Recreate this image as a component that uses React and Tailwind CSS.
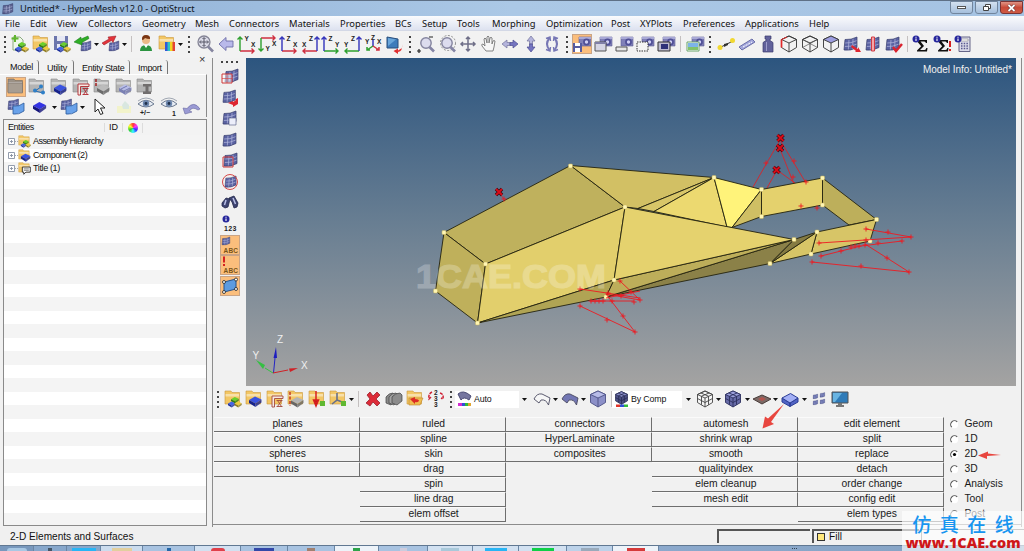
import React from "react";

const MENUS = [
  ["File", "w-[25px]"], ["Edit", "w-[27px]"], ["View", "w-[31px]"], ["Collectors", "w-[54px]"],
  ["Geometry", "w-[53px]"], ["Mesh", "w-[34px]"], ["Connectors", "w-[60px]"], ["Materials", "w-[51px]"],
  ["Properties", "w-[55px]"], ["BCs", "w-[27px]"], ["Setup", "w-[35px]"], ["Tools", "w-[35px]"],
  ["Morphing", "w-[54px]"], ["Optimization", "w-[65px]"], ["Post", "w-[29px]"], ["XYPlots", "w-[43px]"],
  ["Preferences", "w-[62px]"], ["Applications", "w-[64px]"], ["Help", "w-[30px]"],
];

/* ---------- drawing primitives, all on a 20 x 20 grid ---------- */

const Folder = ({ c = "#f3c765", d = "#c9973c" }) => (
  <g>
    <path d="M2 4.500V2h6l1 1.500h7.500V15H2z" fill={c} stroke={d} strokeWidth=".6" />
    <path d="M2.500 5h13.500v2.500h-13.500z" fill="#fff" opacity=".45" />
  </g>
);
const GrayFolder = () => <Folder c="#b4b4b4" d="#8a8a8a" />;

const Block = ({ x = 0, y = 0, s = 1, c = "#3a53e0", d = "#16228c" }) => (
  <g transform={`translate(${x} ${y}) scale(${s})`}>
    <path d="M0 3.500 6 0l6.500 3-6 4z" fill={c} />
    <path d="M0 3.500v3l6.500 4v-3.500z" fill={d} />
    <path d="M12.500 3v3l-6 4.500V7z" fill={d} opacity=".8" />
  </g>
);
const Trio = ({ x = 6, y = 9 }) => (
  <g>
    <Block x={x + 2} y={y - 1} s={0.62} c="#6ad02c" d="#2c7d12" />
    <Block x={x - 1} y={y + 3.5} s={0.58} c="#4364e8" d="#1a2e9c" />
    <Block x={x + 5.500} y={y + 3.5} s={0.58} c="#f0cb3e" d="#8f7a1c" />
  </g>
);
const Mesh = ({ x = 3, y = 3, s = 1, c = "#5a62a2" }) => (
  <g transform={`translate(${x} ${y}) scale(${s})`}>
    <path d="M1 2.500Q7 3 13 0v10.500Q7 14 0 13z" fill={c} />
    <path d="M.8 6Q7 6.500 13 3.500M.5 9.500Q7 10 13 7M5 2.800 4.300 13M9 2 8.600 12.400" fill="none" stroke="#b4b9de" strokeWidth=".7" />
    <path d="M1 2.500Q7 3 13 0v10.500Q7 14 0 13z" fill="none" stroke="#373c6c" strokeWidth=".7" />
  </g>
);
const Camera = () => (
  <g>
    <path d="M7 3h12v9H7z" fill="#8080b8" stroke="#5c5c94" strokeWidth=".6" />
    <path d="M7 3h12v2H7z" fill="#a9a9d6" />
    <circle cx="14.500" cy="8" r="3.400" fill="#4f4f96" />
    <circle cx="14.500" cy="8" r="1.700" fill="#cfcff4" />
  </g>
);
const Lens = ({ dashed }) => (
  <g>
    <circle cx="10" cy="9" r="5.200" fill="#dcdcee" stroke="#85859f" strokeWidth="1.400" />
    {dashed && <circle cx="11" cy="9" r="7.500" fill="none" stroke="#777" strokeWidth=".8" strokeDasharray="2 1.500" />}
    <path d="m13.500 13 4.500 4.500" stroke="#8585a5" strokeWidth="2.600" />
  </g>
);
const Glyph = ({ x, y, children, size = 6.500, fill = "#222", w }) => (
  <text x={x} y={y} fontSize={size} fill={fill} fontWeight="700" textLength={w} fontFamily="Liberation Sans, sans-serif">{children}</text>
);
const Axes = ({ flip, down, v, h, a, b }) => {
  const x0 = flip ? 17 : 3, x1 = flip ? 3 : 17, y0 = down ? 4 : 17, y1 = down ? 17 : 3;
  const sx = flip ? 1 : -1, sy = down ? -1 : 1;
  return (
    <g>
      <path d={`M${x0} ${y0}H${x1}m${2.5 * sx} -2.500 ${-2.5 * sx} 2.500 ${2.5 * sx} 2.500`} stroke={h} strokeWidth="1.400" fill="none" />
      <path d={`M${x0} ${y0}V${y1}m-2.500 ${2.5 * sy} 2.500 ${-2.5 * sy} 2.500 ${2.5 * sy}`} stroke={v} strokeWidth="1.400" fill="none" />
      <Glyph x={flip ? 9 : 7.500} y={down ? 17 : 7}>{a}</Glyph>
      <Glyph x={flip ? 2 : 14} y={down ? 12 : 13}>{b}</Glyph>
    </g>
  );
};
const Cube = ({ c = "none", top = "none", stroke = "#333", mesh }) => (
  <g strokeWidth=".9" stroke={stroke} strokeLinejoin="round">
    <path d="M10 2 17.500 5.500v8L10 18 2.500 13.500v-8z" fill={c} />
    <path d="M2.500 5.500 10 2l7.500 3.500L10 9z" fill={top} />
    <path d="M10 9v9" />
    {mesh && <path d="m2.500 9.500 7.500 4 7.500-4M6 4l7.500 3.200v8.600M14 4 6.500 7.200v8.600" fill="none" />}
  </g>
);
const Eye = () => (
  <g>
    <path d="M2 7q8-7.500 16 0-8 6-16 0z" fill="#e8edf5" stroke="#6c7a90" strokeWidth="1" />
    <circle cx="10" cy="6.500" r="3.200" fill="#6d87ae" />
    <circle cx="10" cy="6.500" r="1.400" fill="#20304a" />
    <path d="M2 4q8-6 16 0" fill="none" stroke="#8b94a2" strokeWidth=".8" />
  </g>
);
const Info = ({ x = 5, y = 5 }) => (
  <g>
    <circle cx={x} cy={y} r="3.500" fill="#27279c" />
    <path d={`M${x} ${y - 0.5}v2.500M${x} ${y - 2.2}v1`} stroke="#fff" strokeWidth="1.100" />
  </g>
);
const Surface = () => (
  <g>
    <Mesh x={2} y={2} s={0.8} />
    <path d="M7 9q6 1 11-3v8q-5 4-11 3z" fill="#69a2ea" stroke="#2c5a9c" strokeWidth=".8" />
  </g>
);
const Curve = ({ c, x = 2, y = 4 }) => (
  <path transform={`translate(${x} ${y})`} d="M0 6Q3 0 8 1l8 4-1.500 7Q12 6 7 7L5 10z" fill={c} stroke="#4a4a60" strokeWidth=".9" />
);
const SIGMA = "M6 6h10v3h-1.200q0-1.500-1.500-1.500H9.500L13 12l-4 4h4.500q1.500 0 1.800-2h1.200l-.5 3.500H6v-1l4.200-4.300L6 7.200z";
const Hinge = ({ c }) => (
  <g>
    <path d="M7 7h11v2.500H9.500V18H7z" fill="#f6e9e4" stroke={c} strokeWidth=".9" />
    <path d="M11.500 11.500h6M11.500 17.500h6M12.500 11.500l4 6M16.500 11.500l-4 6" fill="none" stroke={c} strokeWidth=".9" />
  </g>
);

const ICONS = {
  newModel: <g><path d="M3 3h7l3 3v10H3z" fill="#eef7ea" stroke="#8caa80" /><path d="M5 1v7M1.500 4.500h7" stroke="#61b52f" strokeWidth="2" /><Trio /></g>,
  openModel: <g><Folder /><Trio /></g>,
  saveModel: <g><path d="M2 2h14v14H2z" fill="#6c76ac" /><path d="M5 2h8v5H5zM5 10h8v6H5z" fill="#e6e8f4" /><Trio /></g>,
  importM: <g><Mesh x={8} y={7} s={0.75} /><path d="M15 2 8 5V3L1 8l8 3V8.500l7-4z" fill="#2fae25" stroke="#17731a" strokeWidth=".5" /></g>,
  exportM: <g><Mesh x={8} y={7} s={0.75} /><path d="M1 9 8 5 7 3l8-1-3 6.500-1.500-2L3 11z" fill="#e3343a" stroke="#8e1520" strokeWidth=".5" /></g>,
  user: <g><circle cx="10" cy="6" r="4" fill="#eab987" /><path d="M6 6q-.5-5 4-5t4 4q-3 0-5-1-1 2-3 2" fill="#7a3512" /><path d="M4 17q0-6 6-6t6 6z" fill="#2b9440" /><path d="m8 11 2 3 2-3z" fill="#fff" /></g>,
  folderChart: <g><Folder /><path d="M8 8h3v9H8z" fill="#3457d9" /><path d="M13 8h3v9h-3z" fill="#f1d322" /><path d="M15.500 8h2.500v9h-2.500z" fill="#e44335" /><path d="M10.500 8h2.500v9h-2.500z" fill="#31c5c0" /></g>,
  zoomFit: <g><circle cx="9" cy="8" r="6" fill="#dcdce8" stroke="#858596" strokeWidth="1.300" /><path d="M9 4v8M5 8h8M7.500 5 9 3.500 10.500 5M7.500 11 9 12.500l1.500-1.500M6 6.500 4.500 8 6 9.500M12 6.500 13.500 8 12 9.500" stroke="#555565" fill="none" /><path d="m13 12.500 5 5" stroke="#85859f" strokeWidth="2.600" /></g>,
  back: <path d="M3 10 10 3.500v3.500h7v6h-7v3.500z" fill="#b9b9ea" stroke="#6d6da8" strokeWidth=".9" />,
  ax1: <Axes v="#2ea02e" h="#cf3040" a="Y" b="X" />,
  ax2: <Axes down v="#2ea02e" h="#cf3040" a="Y" b="X" />,
  ax3: <Axes v="#3434bc" h="#cf3040" a="Z" b="X" />,
  ax4: <Axes flip v="#3434bc" h="#cf3040" a="Z" b="X" />,
  ax5: <Axes v="#3434bc" h="#2ea02e" a="Z" b="Y" />,
  ax6: <Axes flip v="#3434bc" h="#2ea02e" a="Z" b="Y" />,
  iso: <g><path d="M10 6v6" stroke="#3434bc" strokeWidth="1.500" /><path d="m10 12-6 4m0-3v3h3" stroke="#2ea02e" strokeWidth="1.500" fill="none" /><path d="m10 12 6 4m0-3v3h-3" stroke="#cf3040" strokeWidth="1.500" fill="none" /><Glyph x={2} y={10}>Y</Glyph><Glyph x={8} y={6}>Z</Glyph><Glyph x={14} y={10}>X</Glyph></g>,
  screenRot: <g><path d="m3 3 11 2v9L3 14z" fill="#3e7cbb" stroke="#284f7c" /><path d="m4 4 8 1.500L4 12z" fill="#6aa6da" /><path d="M18 10v4l-4 2.500v-2L9.500 17l4.500 3v-2q5-1 4-8z" fill="#df2f30" /></g>,
  zoomPM: <g><Lens /><path d="M1 17h4M3 15v4M13 3h4" stroke="#222" strokeWidth="1.200" /></g>,
  zoomCircle: <Lens dashed />,
  pan4: <path d="M10 3v14M3 10h14M8 5l2-2 2 2M8 15l2 2 2-2M5 8l-2 2 2 2M15 8l2 2-2 2" fill="none" stroke="#6f6f88" strokeWidth="1.500" />,
  hand: <path d="M7 17 3 12q-1-2 1-2l2 2-1-7q1-2 2 0l1 4V3q1-2 2 0v6l1-5q1-1.500 2 0v6l1-3q1-1 2 0l-1 6-1 4z" fill="#f7f7f7" stroke="#777" strokeWidth=".9" />,
  leftRight: <g strokeWidth=".7"><path d="m2 10 5-4v2.500h3v3H7V14z" fill="#b4b4dc" stroke="#74749c" /><path d="M10 8.500h3V6l5 4-5 4v-2.500h-3z" fill="#7474c0" stroke="#4c4c90" /></g>,
  upDown: <g strokeWidth=".7"><path d="m10 2 4 5h-2.500v3h-3V7H6z" fill="#b4b4dc" stroke="#74749c" /><path d="M8.500 10h3v3H14l-4 5-4-5h2.500z" fill="#7474c0" stroke="#4c4c90" /></g>,
  spin: <g fill="none" stroke="#7777b5" strokeWidth="2"><path d="M7.500 4Q2.500 10 7.500 16M12.500 16q5-6 0-12" /><path d="M4 4.500 8 3l.5 4M4 15.500l4 1.500.5-4M16 4.500 12 3l-.5 4M16 15.500 12 17l-.5-4" strokeWidth="1.400" /></g>,
  camSave: <g><Camera /><path d="M1 9h9v9H1z" fill="#555ba0" /><path d="M3 9h5v3H3zM3 14h5v4H3z" fill="#fff" /></g>,
  camWin: <g><Camera /><path d="M2 8h11v9H2z" fill="#d5d5e4" stroke="#555" /><path d="M2 8h11v2H2z" fill="#7f7fa7" /></g>,
  camBar: <g><Camera /><path d="M2 13h11v4H2z" fill="#e6e6e6" stroke="#555" /></g>,
  camDash: <g><Camera /><path d="M2 8h11v9H2z" fill="#f4f4f4" stroke="#333" strokeDasharray="1.500 1" /></g>,
  camFill: <g><Camera /><path d="M2 8h12v9H2z" fill="#bbbbd0" stroke="#333" /><path d="M5 10h7v5H5z" fill="#2d3278" /></g>,
  camImg: <g><Camera /><path d="M2 8h12v9H2z" fill="#fff" stroke="#68a468" /><path d="M3 9h10v4H3z" fill="#7db4e8" /><path d="M3 13h10v3H3z" fill="#82c36a" /></g>,
  nodes: <g><path d="m3 14 14-7" stroke="#333" /><circle cx="4" cy="13.500" r="2.500" fill="#f1d831" /><circle cx="16.500" cy="6.500" r="2.500" fill="#f1d831" /><path d="m8 10 4-1v2l-4 2z" fill="#333" /></g>,
  beam: <g><path d="m2 13 13-8 3 3-13 8z" fill="#a3a7dc" stroke="#6a6ea8" /><path d="m6 13 9-5" stroke="#fff" strokeDasharray="2 1" /></g>,
  weight: <g><path d="M7 2h6v3h-1v1.500l3 2V18H5V8.500l3-2V5H7z" fill="#62629b" stroke="#3c3c6e" strokeWidth=".7" /><path d="M8.500 8v9" stroke="#9d9dcb" /></g>,
  cubeRed: <g><Cube /><path d="M2.500 5.500v8" stroke="#e32a2a" strokeWidth="1.700" /><path d="M2.500 5.500 8 3" stroke="#e32a2a" /></g>,
  cubeX: <g><Cube /><path d="m2.500 5.500 15 8M17.500 5.500l-15 8" stroke="#555" strokeWidth=".7" /></g>,
  cubeTop: <Cube top="#9d9ddf" />,
  meshRed: <g><Mesh x={2} /><path d="m10 11 6 4v-2l3 5-6 0 1-1-5-4z" fill="#dd2630" /></g>,
  meshMid: <g><Mesh /><path d="M8.500 3h3v14H8.500z" fill="#f5a6a8" stroke="#d03b45" /></g>,
  meshCheck: <g><Mesh x={2} /><path d="m9 13 3 4 6-7" fill="none" stroke="#d9232e" strokeWidth="2.500" /></g>,
  sigma: <g><path d={SIGMA} fill="#111" /><Info /></g>,
  sigmaBang: <g><path d={SIGMA} fill="#111" /><path d="M18 7v6M18 15v2" stroke="#d52020" strokeWidth="2" /><Info /></g>,
  calc: <g><path d="M6 3h11v14.500H6z" fill="#dadae8" stroke="#666688" /><path d="M8 5h7v2H8z" fill="#fff" stroke="#777" strokeWidth=".5" /><path d="M8 9.500h7M8 12h7M8 14.500h7" stroke="#5a5a90" strokeDasharray="1.500 1.200" strokeWidth="1.300" /><Info /></g>,
  caret: <path d="M0 0h5L2.500 3z" fill="#111" />,

  gFolder: <g><Folder c="#9b9186" d="#6f6862" /><path d="M2 6h14.500v10H2z" fill="#a79d92" stroke="#7a7168" strokeWidth=".6" /></g>,
  gShare: <g><GrayFolder /><path d="m8 14 6-4m-6 4 8 2" stroke="#246bb0" /><circle cx="8" cy="13.500" r="2" fill="#2f80c8" /><circle cx="14" cy="9.500" r="2" fill="#2f80c8" /><circle cx="16" cy="15.500" r="2" fill="#2f80c8" /></g>,
  gBlock: <g><GrayFolder /><Block x={5} y={7.500} /></g>,
  gHinge: <g><GrayFolder /><Hinge c="#b0282f" /></g>,
  gGray: <g><GrayFolder /><Block x={5} y={7.500} c="#bcbcbc" d="#6b6b6b" /><path d="M4 2v7" stroke="#a12020" strokeWidth="1.500" strokeDasharray="3 1" /></g>,
  gMesh: <g><GrayFolder /><Block x={5} y={7.500} c="#b8bde8" d="#7a80b4" /><path d="m7 12 6-3m-3 5 6-3" stroke="#6268a0" strokeWidth=".8" /></g>,
  gBeam: <g><GrayFolder /><path d="M8 7h8v2.500h-2.500v5H16V17H8v-2.500h2.500v-5H8z" fill="#716e6e" /></g>,
  surface: <Surface />,
  block: <Block x={3} y={5} s={1.050} c="#3434e4" d="#15157c" />,
  pointer: <path d="M6 2v13l3-3 2.500 5.500 2.500-1L11.500 11H16z" fill="#fff" stroke="#222" />,
  ghost: <g opacity=".5"><path d="M3 9h14v7H3z" fill="#f4f6a6" /><path d="m8 8 3-4 4 4v4H9z" fill="#c3dfd0" /></g>,
  eyePM: <g><Eye /><Glyph x={4} y={18} size={7}>+/−</Glyph></g>,
  eye1: <g><Eye /><Glyph x={13} y={19} size={7}>1</Glyph></g>,
  undo: <path d="M1 11 3 17l7-2-2.500-1Q10 9 16 13l2-1Q12 3 5 11.500z" fill="#9a9ad4" stroke="#6a6aa0" strokeWidth=".6" />,

  vSplit: <g><Mesh x={5} y={2} /><path d="M2 7h10v9H2z" fill="#fff" fillOpacity=".5" stroke="#cf3838" /><path d="M7 7v9M2 11.500h10" stroke="#cf3838" strokeWidth=".6" /></g>,
  vRot: <g><Mesh x={3} y={2} s={0.95} /><path d="M18 10v6l-5 3v-2l-5-2 5-2v1q3-1 3-3z" fill="#dd2630" /></g>,
  vHalf: <g><Mesh x={3} y={2} /><path d="M9 9h7v7H9z" fill="#eceefa" stroke="#666a90" strokeWidth=".7" /></g>,
  vMesh: <Mesh />,
  vBox: <g><Mesh x={4} y={2} /><path d="M3 6h10v10H3z" fill="none" stroke="#cf3838" /></g>,
  vCircle: <g><Mesh x={5} y={4} s={0.85} /><circle cx="10" cy="10" r="7.500" fill="none" stroke="#d64848" /></g>,
  binoc: <g><path d="m2 10 4-5 4 1-2 8-3 1-3-2zM9 5l5-2 4 7-1 4-3 1-2-6z" fill="#3d4370" stroke="#23284c" strokeWidth=".8" /><path d="M6 7 4.500 12M13 5l2.500 6" stroke="#b9bfe6" strokeWidth="1.500" /></g>,
  info123: <g><Info x={6} y={5} /><Glyph x={4} y={17} size={7} w={12.5}>123</Glyph></g>,
  abcMesh: <g><Mesh x={2} y={2} s={0.6} /><Glyph x={3.500} y={18} size={6.500} w={14.500} fill="#7a5416">ABC</Glyph></g>,
  abcRed: <g><path d="M4 1.500v6M4 9v2" stroke="#d52020" strokeWidth="2" /><Glyph x={3.500} y={18} size={6.500} w={14.500} fill="#7a5416">ABC</Glyph></g>,
  quad: <g><path d="m4 6 12-3v10L4 16z" fill="#5d9be0" stroke="#25528c" /><g fill="#fff" stroke="#222" strokeWidth=".8"><circle cx="4" cy="6" r="1.500" /><circle cx="16" cy="3.500" r="1.500" /><circle cx="16" cy="13" r="1.500" /><circle cx="4" cy="16" r="1.500" /></g></g>,

  yTrio: <g><Folder /><Trio /></g>,
  yBlock: <g><Folder /><Block x={5} y={7.500} /></g>,
  yHinge: <g><Folder /><Hinge c="#a4483c" /></g>,
  yGray: <g><Folder /><Block x={5} y={8} c="#b4b4b4" d="#666" /><path d="M4 3v14" stroke="#c53a26" strokeWidth="1.500" strokeDasharray="3 1.500" /></g>,
  yArrow: <g><Folder /><path d="M9 2v12M6.500 11 9 17l2.500-6z" stroke="#d82020" strokeWidth="1.500" fill="#9a1010" /><path d="M13 12h5v5h-5z" fill="#60b832" /></g>,
  yAxis: <g><Folder /><path d="M9 4v7l-5 4m5-4 5 2" stroke="#68708a" strokeWidth="1.600" fill="none" /><path d="M13 12h5v5h-5z" fill="#60b832" /></g>,
  cross: <path d="m4 6 3-3 3 4 4-4 3 3-4 4 4 4-3 3-4-4-3 4-4-3 4-4z" fill="#dc2b38" stroke="#8f1420" strokeWidth=".7" />,
  stack: <g fill="#8a8a8a" stroke="#3f3f3f" strokeWidth=".7"><path d="M2 8q3-4 7-4l2 2v5l-4 5-5-2z" /><path d="M5 8q3-4 7-4l2 2v5l-4 5-5-2z" fill="#a3a3a3" /><path d="M8 8q3-4 8-4l2 2v6l-5 4-5-2z" fill="#8c8c8c" /></g>,
  yRedo: <g><Folder /><path d="M4 9h14l-3 7H4z" fill="#f0be50" stroke="#bd8730" strokeWidth=".6" /><path d="m5 10 5-2v2q4 0 4 2-2 2-4 1v2z" fill="#dc2b25" /></g>,
  renum: <g><Glyph x={8} y={6}>2</Glyph><Glyph x={8} y={12}>3</Glyph><Glyph x={8} y={18}>3</Glyph><path d="M6 3Q2 5 3 10l2-2M14 4q4 1 3 6l-2-1" stroke="#cf2438" strokeWidth="1.500" fill="none" strokeDasharray="3 1" /></g>,
  autoIc: <g><path d="M3 5q5-5 13 2l-2 4Q9 7 6 11z" fill="#75759f" stroke="#4b4b74" /><path d="M3 14h4v3H3z" fill="#d22ed0" /><path d="M7 14h3v3H7z" fill="#3050d8" /><path d="M10 14h3v3h-3z" fill="#2fb93a" /><path d="M13 14h3v3h-3z" fill="#e0a52f" /></g>,
  curveW: <Curve c="#f6f6f6" />,
  curveB: <Curve c="#7377b4" />,
  cubeSolid: <Cube c="#8c90c8" top="#b8bce8" stroke="#4c5084" />,
  compIc: <g><g transform="translate(1.500 1) scale(.8)"><Cube c="#4c5084" top="#8a8eca" stroke="#24284f" mesh /></g><path d="M4 15.500h4v2.500H4z" fill="#e0352a" /><path d="M8 15.500h4v2.500H8z" fill="#3050d8" /><path d="M12 15.500h4v2.500h-4z" fill="#33bb3d" /></g>,
  wireCube: <Cube mesh stroke="#444" c="#f5f5f5" />,
  meshCube: <Cube mesh c="#666aa6" top="#9ca0dc" stroke="#2b2f5e" />,
  plate: <g><path d="m1 10 9-4 9 4-9 5z" fill="#7a6a66" stroke="#4a3c3a" /><path d="m6 10 4-2 4 2-4 2z" fill="#b35650" /></g>,
  slab: <g strokeLinejoin="round"><path d="M2 9v4l8 4.500V14zM18 9v4l-8 4.500V14z" fill="#5163c4" stroke="#2b3d96" /><path d="m2 9 8.500-4.500L18 9l-8 5z" fill="#a4b0f6" stroke="#2b3d96" /></g>,
  split: <g><Mesh x={4} y={5} s={0.36} /><Mesh x={11} y={3.500} s={0.36} /><Mesh x={4} y={11} s={0.36} /><Mesh x={11} y={10} s={0.36} /></g>,
  monitor: <g><path d="M2 3h16v11H2z" fill="#2f7bb8" stroke="#555" /><path d="M3 4h9L5 13H3z" fill="#68b4e2" /><path d="M8 14h4v2h2v2H6v-2h2z" fill="#777" /></g>,
};

const Ic = ({ n, on }) => (
  <span className={on ? "block h-5 w-5 shrink-0 bg-[#fbbe7c] outline outline-1 -outline-offset-1 outline-[#c9a486]" : "block h-5 w-5 shrink-0"}>
    <svg viewBox="0 0 20 20" className="block h-5 w-5">{ICONS[n]}</svg>
  </span>
);
const Slot = ({ n, on, w = "w-[21px]" }) => (
  <span className={`flex shrink-0 items-center justify-center ${w}`}><Ic n={n} on={on} /></span>
);
const Slots = ({ names, w }) => names.split(" ").map((n) => <Slot key={n} n={n} w={w} />);
const Caret = ({ w = "w-[7px]" }) => (
  <span className={`flex shrink-0 items-center justify-center ${w}`}>
    <svg viewBox="0 0 5 3" className="h-[3px] w-[5px] shrink-0">{ICONS.caret}</svg>
  </span>
);
const Grip = ({ w }) => (
  <span className={`flex shrink-0 flex-col items-center justify-center gap-[3px] ${w}`}>
    {[0, 1, 2, 3].map((i) => <i key={i} className="block h-[2px] w-[2px] bg-[#444]" />)}
  </span>
);
const Sep = ({ w }) => (
  <span className={`flex shrink-0 justify-center ${w}`}><i className="block h-4 w-px bg-[#c4c0c0]" /></span>
);

/* ---------- title bar, menu bar, main toolbar ---------- */

const TitleBar = () => (
  <div className="flex h-4 shrink-0 items-center border-t border-[#5e7086] bg-gradient-to-r from-[#8fb0d6] via-[#abc8e6] to-[#a5c3e3] pl-[2px]">
    <svg viewBox="0 0 20 20" className="h-3 w-3"><Mesh x={1} y={1} s={1.3} c="#5b6290" /></svg>
    <span className="ml-[6px] whitespace-pre text-[9.3px] leading-none tracking-[-0.04px] text-[#10161e]">Untitled* - HyperMesh v12.0 - OptiStruct</span>
    <div className="ml-auto flex h-full items-start gap-[2px] pr-[1px]">
      <span className="flex h-[13px] w-[23px] items-center justify-center rounded-b-[3px] border border-[#71859d] bg-gradient-to-b from-[#d3e1f0] to-[#a5bfdc]"><i className="block h-[3px] w-[9px] border border-[#555] bg-white" /></span>
      <span className="flex h-[13px] w-[23px] items-center justify-center rounded-b-[3px] border border-[#71859d] bg-gradient-to-b from-[#d3e1f0] to-[#a5bfdc]">
        <svg viewBox="0 0 10 9" className="h-[9px] w-[10px]" fill="#fff" stroke="#444"><path d="M3.500 1.500h5v4h-5z" /><path d="M1.500 3.500h5v4h-5z" /></svg>
      </span>
      <span className="flex h-[13px] w-[23px] items-center justify-center rounded-b-[3px] border border-[#7a3434] bg-gradient-to-b from-[#df9384] via-[#c94a38] to-[#cf5a44]">
        <svg viewBox="0 0 9 8" className="h-2 w-[9px]"><path d="m1.500 1 6 6m0-6-6 6" stroke="#5a2a2a" strokeWidth="3" /><path d="m1.500 1 6 6m0-6-6 6" stroke="#fff" strokeWidth="1.800" /></svg>
      </span>
    </div>
  </div>
);

const MenuBar = () => (
  <div className="flex h-[15px] shrink-0 items-center border-b border-[#d3d8e6] bg-gradient-to-b from-[#fafbfd] to-[#dde2f0] pl-[5px] pt-px">
    {MENUS.map(([t, w]) => <span key={t} className={`shrink-0 whitespace-nowrap text-[9.35px] leading-none text-[#111] ${w}`}>{t}</span>)}
  </div>
);

const MainToolbar = () => (
  <div className="flex h-[27px] shrink-0 items-center bg-[#f2f2f2] pb-px">
    <Grip w="w-[9px]" />
    <Slots names="newModel openModel saveModel importM" /><Caret />
    <Slot n="exportM" /><Caret /><Sep w="w-[7px]" />
    <Slots names="user folderChart" /><Caret />
    <Grip w="w-[10px]" />
    <Slots names="zoomFit back ax1 ax2 ax3 ax4 ax5 ax6 iso screenRot" />
    <Grip w="w-[11px]" />
    <Slots names="zoomPM zoomCircle pan4 hand leftRight upDown spin" />
    <Grip w="w-[9px]" />
    <Slot n="camSave" on /><Slots names="camWin camBar camDash camFill" /><Sep w="w-[8px]" /><Slot n="camImg" />
    <Grip w="w-[10px]" />
    <Slots names="nodes beam weight cubeRed cubeX cubeTop meshRed meshMid meshCheck" />
    <Sep w="w-[6px]" />
    <Slots names="sigma sigmaBang calc" />
  </div>
);

/* ---------- model browser ---------- */

const TREE = [
  ["Assembly Hierarchy", <Trio key="t" />, "tracking-[-0.6px]"],
  ["Component (2)", <Block key="b" x={5} y={7.500} s={1.050} />, "tracking-[-0.5px]"],
  ["Title (1)", <g key="n"><path d="M7 8h11v7h-6l-3 3v-3H7z" fill="#fff" stroke="#222" strokeWidth="1.200" /><path d="M9 10.500h7M9 12.500h7" stroke="#555" /></g>, "tracking-[-0.4px]"],
];

const Browser = () => (
  <aside className="flex w-[212px] shrink-0 flex-col bg-[#f1f1f1] pb-px">
    <div className="flex h-[16px] shrink-0 items-end pl-[2px] text-[9px] leading-none tracking-[-0.3px] text-[#111]">
      {[["Model", "w-[37px] pl-[8px] pb-[2px]"], ["Utility", "w-[35px] pl-[8px] pb-px"], ["Entity State", "w-[56px] pl-[8px] pb-px"], ["Import", "w-[38px] pl-[8px] pb-px"]].map(([t, w]) => (
        <span key={t} className={`flex h-[14px] shrink-0 items-end whitespace-nowrap rounded-tr-[3px] border-r border-[#777] ${w}`}>{t}</span>
      ))}
      <span className="ml-auto mr-[7px] self-start text-[11px] leading-[2px] text-[#333]">×</span>
    </div>
    <div className="mr-[5px] flex shrink-0 flex-col border-r border-t border-r-[#8a8a8a] border-t-white pl-[5px] pt-[2px]">
      <div className="flex h-5 items-center"><Slot n="gFolder" on w="w-[21.6px]" /><Slots w="w-[21.6px]" names="gShare gBlock gHinge gGray gMesh gBeam" /></div>
      <div className="flex h-[20px] items-center">
        <Slot n="surface" w="w-[22px]" /><Slot n="block" w="w-[25px]" /><Caret w="w-[5px]" />
        <Slot n="surface" w="w-[23px]" /><Caret w="w-[5px]" />
        <Slot n="pointer" w="w-[28px]" /><Slot n="ghost" w="w-[21px]" /><Slots w="w-[23px]" names="eyePM eye1 undo" />
      </div>
    </div>
    <div className="ml-[3px] mr-[5px] mt-[2px] flex min-h-0 flex-1 flex-col overflow-hidden border border-[#8a8a8a] bg-white">
      <div className="flex h-[15px] shrink-0 items-center bg-[#f3f3f3] text-[9px] leading-none text-[#111]">
        <span className="w-[101px] border-r border-[#dcdcdc] pl-[4px] tracking-[-0.45px]">Entities</span>
        <span className="w-[18px] border-r border-[#dcdcdc] pl-[4px]">ID</span>
        <span className="flex w-[20px] justify-center border-r border-[#dcdcdc]">
          <i className="block h-[10px] w-[10px] rounded-full bg-[conic-gradient(#f33,#f3f,#33f,#3ff,#3c3,#ff3,#f33)]" />
        </span>
      </div>
      {Array.from({ length: 29 }, (_, i) => (
        <div key={i} className="flex h-[13.5px] shrink-0 items-center pl-[4px] odd:bg-white even:bg-[#f4f4f4]">
          {TREE[i] && (
            <>
              <svg viewBox="0 0 7 7" className="h-[7px] w-[7px]"><path d="M.5.5h6v6h-6zM2 3.500h3M3.500 2v3" fill="#fff" stroke="#8892a4" strokeWidth=".9" /></svg>
              <i className="block w-[3px] border-t border-dotted border-[#aaa]" />
              <svg viewBox="1 1 18 18" className="h-[13px] w-[13px]"><Folder />{TREE[i][1]}</svg>
              <span className={`ml-[2px] whitespace-nowrap text-[9.1px] leading-none text-[#111] ${TREE[i][2]}`}>{TREE[i][0]}</span>
            </>
          )}
        </div>
      ))}
    </div>
  </aside>
);

/* ---------- 3D model view ---------- */

const FACES = [
  ["570.500,165.500 444,232.500 485.500,264 625,207", "#bfb15d"],
  ["444,232.500 485.500,264 477.500,323 435.500,291", "#bfb05b"],
  ["485.500,264 625,207 614,280 477.500,323", "#e2cf6c"],
  ["477.500,323 614,280 606,297", "#b0a454"],
  ["570.500,165.500 714,177.500 638,208.500 625,207", "#d2c064"],
  ["714,177.500 638,208.500 654,211.500", "#d8c668"],
  ["714,177.500 654,211.500 727,227", "#ecd970"],
  ["714,177.500 761.500,189.500 732,227.500 727,227", "#fff37a"],
  ["761.500,189.500 761.500,216.500 732,227.500", "#cfbf64"],
  ["761.500,189.500 822.500,178 822.500,205 761.500,216.500", "#e4d16d"],
  ["822.500,178 876.500,219.500 849,225 822.500,205", "#bdaf5b"],
  ["876.500,219.500 870,241 811,254 817,232", "#d7c567"],
  ["817,232 811,254 770,263.500", "#d7c567"],
  ["794,239.500 817,232 770,263.500", "#857b42"],
  ["794,239.500 770,263.500 606,297", "#8b8148"],
  ["614,280 794,239.500 606,297", "#bdae5a"],
  ["625,207 794,239.500 614,280", "#e5d26e"],
];
const NODES = [[570.5, 166], [444, 232.5], [485.5, 264], [625, 207], [435.5, 291], [477.5, 323], [614, 280], [606, 297], [714, 177.5], [761.5, 189.5], [822.5, 178], [876.5, 219.5], [822.5, 205], [761.5, 216.5], [870, 241], [817, 232], [811, 254], [794, 239.5], [770, 263.5]];
const PLUSES = [[580, 289], [580, 306], [607, 320], [635, 332], [620, 281], [631, 292], [640, 300], [634, 302], [621, 296], [623, 316], [608, 293], [591, 301], [595, 301], [599, 301], [603, 301], [612, 301], [866, 229], [888, 232], [911, 237], [902, 241], [866, 240], [878, 243], [819, 243], [821, 256], [841, 251], [851, 247], [855, 246], [859, 246], [865, 245], [887, 258], [909, 272], [861, 266], [812, 262], [801, 206], [817, 208], [766, 163], [794, 161], [793, 177], [806, 182], [504, 199]];
const CROSSES = [[780.5, 138], [780, 148], [776.5, 170], [499, 192]];

const Viewport = () => (
  <div className="h-[328px] w-[770px] shrink-0 bg-gradient-to-b from-[#2c557f] via-[#687e92] to-[#a4a3a2]">
    <svg viewBox="246 58 770 328" className="block h-[328px] w-[770px]">
      <g stroke="#e81a20" strokeWidth=".8" fill="none">
        <path d="M753 187 780 140 806 183M767 188l10-18 18 13M780 149l14 35M499 193l5 6" />
      </g>
      <g stroke="#24220f" strokeWidth=".9" strokeLinejoin="round">
        {FACES.map(([p, c]) => <polygon key={p} points={p} fill={c} />)}
      </g>
      <g fill="#fff6b4" stroke="#c9b55c" strokeWidth=".5">
        {NODES.map(([x, y]) => <rect key={`${x}-${y}`} x={x - 2} y={y - 2} width="4" height="4" rx="1" />)}
      </g>
      <g stroke="#ee1a20" strokeWidth=".9" fill="none">
        <path d="M580 289 640 298M580 306l55 26-29-38 34 6-20-19M590 301h44M606 298l34-7" />
        <path d="m866 229 45 8-92 6M821 256l40-10 41-5M865 244l44 28M812 262l97 10M806 182l-1-2" />
        {PLUSES.map(([x, y]) => <path key={`${x}-${y}`} d={`M${x - 2.5} ${y}h5M${x} ${y - 2.500}v5`} />)}
      </g>
      {CROSSES.map(([x, y]) => (
        <g key={`${x}-${y}`}>
          <path d={`M${x - 3} ${y - 3}l6 6m0-6l-6 6`} stroke="#3c0810" strokeWidth="3.400" />
          <path d={`M${x - 3} ${y - 3}l6 6m0-6l-6 6`} stroke="#d80b18" strokeWidth="2" />
        </g>
      ))}
      <g opacity=".24">
        <text x="416" y="288" fontSize="33" fontWeight="700" fill="#fff" stroke="#fff" strokeWidth="1.200" textLength="190" lengthAdjust="spacingAndGlyphs" fontFamily="Liberation Sans, sans-serif">1CAE.COM</text>
      </g>
      <path d="m273.500 373 1.500-15" stroke="#2424c4" /><path d="m273.500 358 2.500-11 1 11z" fill="#1e1ec0" />
      <path d="m273 373-8-5" stroke="#35c043" /><path d="m256 360 9 5-2 4z" fill="#35c043" />
      <path d="m273 373 15-3" stroke="#cf2126" /><path d="m298 368-9 .5 1 3.500z" fill="#cf2126" />
      <g fontSize="10" fill="#f0f0f0" fontFamily="Liberation Sans, sans-serif">
        <text x="277" y="343">Z</text><text x="252.500" y="359">Y</text><text x="301" y="368.500">X</text>
        <text x="923" y="73" fontSize="10" textLength="89">Model Info: Untitled*</text>
      </g>
    </svg>
  </div>
);

const ViewToolbar = () => (
  <div className="flex w-[33px] shrink-0 flex-col items-center pt-[3px]">
    <div className="flex h-[6px] gap-[3px]">{[0, 1, 2, 3].map((i) => <i key={i} className="block h-[2px] w-[2px] bg-[#444]" />)}</div>
    {["vSplit", "vRot", "vHalf", "vMesh", "vBox", "vCircle", "binoc", "info123"].map((n) => (
      <span key={n} className="flex h-[20.9px] shrink-0 items-center"><Ic n={n} /></span>
    ))}
    {["abcMesh", "abcRed", "quad"].map((n) => (
      <span key={n} className="flex h-[20.9px] shrink-0 items-center"><Ic n={n} on /></span>
    ))}
  </div>
);

/* ---------- collector toolbar and command panel ---------- */

const Combo = ({ icon, label, w }) => (
  <span className={`flex h-[17px] shrink-0 items-center bg-white text-[8.8px] leading-none tracking-[-0.15px] text-[#111] ${w}`}>
    <Ic n={icon} /><span className="-ml-px whitespace-nowrap">{label}</span>
  </span>
);

const LowerToolbar = () => (
  <div className="flex h-[26px] shrink-0 items-center pl-[1px]">
    <Grip w="w-[8px]" />
    <Slots names="yTrio yBlock yHinge yGray yArrow yAxis" /><Caret w="w-[6px]" /><Sep w="w-[8px]" />
    <Slots names="cross stack yRedo renum" />
    <Grip w="w-[9px]" />
    <Combo icon="autoIc" label="Auto" w="w-[64px]" /><Caret w="w-[11px]" />
    <Slot n="curveW" w="w-[23px]" /><Caret w="w-[5px]" />
    <Slot n="curveB" w="w-[23px]" /><Caret w="w-[5px]" />
    <Slot n="cubeSolid" w="w-[24px]" /><Sep w="w-[2px]" />
    <Combo icon="compIc" label="By Comp" w="w-[70px]" /><Caret w="w-[12px]" />
    <Slot n="wireCube" /><Caret w="w-[7px]" />
    <Slot n="meshCube" /><Caret w="w-[8px]" />
    <Slot n="plate" /><Caret w="w-[7px]" />
    <Slot n="slab" /><Caret w="w-[8px]" />
    <Slots names="split monitor" />
  </div>
);

const COLUMNS = [
  ["planes", "cones", "spheres", "torus"],
  ["ruled", "spline", "skin", "drag", "spin", "line drag", "elem offset"],
  ["connectors", "HyperLaminate", "composites"],
  ["automesh", "shrink wrap", "smooth", "qualityindex", "elem cleanup", "mesh edit"],
  ["edit element", "split", "replace", "detach", "order change", "config edit", "elem types"],
];
const PAGES = ["Geom", "1D", "2D", "3D", "Analysis", "Tool", "Post"];

const CommandPanel = () => (
  <div className="relative flex h-[113px] shrink-0 border-b border-[#8c8c8c] pl-px pt-[5px]">
    {COLUMNS.map((col) => (
      <div key={col[0]} className="flex w-[146.1px] shrink-0 flex-col">
        {col.map((t) => (
          <span key={t} className="flex h-[15px] shrink-0 items-center justify-center border-b border-r border-t border-b-[#6e6e6e] border-r-[#6e6e6e] border-t-[#fafafa] pl-[2px] text-[10.3px] leading-none text-[#1a1a1a]">{t}</span>
        ))}
      </div>
    ))}
    <div className="flex flex-col pl-[6px]">
      {PAGES.map((t) => (
        <span key={t} className="flex h-[15px] items-center gap-[5px] text-[10.3px] leading-none text-[#1a1a1a]">
          <svg viewBox="0 0 9 9" className="h-[9px] w-[9px]">
            <circle cx="4.500" cy="4.500" r="3.700" fill="#fff" />
            <path d="M7.200 1.800A3.800 3.800 0 1 0 1.800 7.200" fill="none" stroke="#555" strokeWidth="1.100" />
            {t === "2D" && <circle cx="4.500" cy="4.500" r="1.600" fill="#000" />}
          </svg>
          {t}
        </span>
      ))}
    </div>
    <svg viewBox="760 400 245 62" className="absolute left-[547px] top-[-12px] h-[62px] w-[245px]" fill="#e8463f">
      <path d="M784 404 771 422l3 2-11.500 4.500 2.500-12 3 2z" />
      <path d="m1001 455-14 1v3l-9-3.500 10-4v2z" />
    </svg>
  </div>
);

/* ---------- status bar and task bar ---------- */

const StatusBar = () => (
  <div className="flex h-[18px] shrink-0 items-center bg-[#f0f0f0] pl-[10px] text-[10.1px] leading-none text-[#111]">
    <span className="w-[707px] shrink-0 pt-[2px]">2-D Elements and Surfaces</span>
    <span className="h-[14px] w-[93px] shrink-0 border-l-2 border-t-2 border-[#555]" />
    <span className="ml-[2px] flex h-[14px] w-[107px] shrink-0 items-center border-l-2 border-t-2 border-[#555] pl-[3px]">
      <i className="mr-[4px] block h-[8px] w-[8px] border border-[#333] bg-[#ffe87c]" />Fill
    </span>
    <span className="ml-[2px] h-[14px] flex-1 border-l border-t border-[#777]" />
  </div>
);

const TASKS = [
  ["w-[34px] bg-[#7898bd]", "w-5 bg-[#a8c8e4] rounded-t-full"], ["w-[33px] bg-[#87a7cb]", "w-1 bg-[#456]"],
  ["w-[34px] bg-[#87a7cb]", "w-[24px] bg-[#28b5f5]"], ["w-[42px] bg-[#cbdcee]", "w-5 bg-[#e1cf9e]"],
  ["w-[52px] bg-[#a8c3e1]", "w-1 bg-[#2467a8]"], ["w-[46px] bg-[#d2e1f1]", "w-[14px] bg-[#e0404a] rounded-t-full"],
  ["w-[47px] bg-[#a8c3e1]", "w-[20px] bg-[#3348a8]"], ["w-[47px] bg-[#a8c3e1]", "w-[8px] bg-[#a08070]"],
  ["w-[44px] bg-[#edf3f9]", "w-[7px] bg-[#2da34a]"], ["w-[49px] bg-[#a8c3e1]", "w-[7px] bg-[#ccd]"],
  ["w-[45px] bg-[#d2e1f1]", "w-[18px] bg-[#a9c9da]"], ["w-[46px] bg-[#d2e1f1]", "w-[22px] bg-[#28b5f5]"],
  ["w-[48px] bg-[#d2e1f1]", "w-[22px] bg-[#10cf48]"], ["w-[46px] bg-[#bcd2e9]", "w-[18px] bg-[#9ab]"],
  ["w-[46px] bg-[#edf3f9]", "w-[18px] bg-[#d53a3a]"],
];

const TaskBar = () => (
  <div className="flex h-[6px] shrink-0 overflow-hidden border-t border-[#607892] bg-gradient-to-r from-[#7494b9] via-[#8eabd0] to-[#85a3c3]">
    {TASKS.map(([w, c], i) => (
      <span key={i} className={`flex shrink-0 items-end justify-center border-r border-[#6a86a5] ${w}`}><i className={`block h-[3px] ${c}`} /></span>
    ))}
    <span className="flex w-[270px] items-center justify-center gap-px">
      {[0, 1, 2].map((i) => <i key={i} className="block h-px w-px bg-[#345]" />)}
    </span>
  </div>
);

export default function App() {
  return (
    <div className="relative flex h-[551px] w-[1024px] flex-col overflow-hidden bg-[#f1f1f1] font-['Liberation_Sans',Arial,sans-serif]">
      <div className="flex shrink-0 flex-col font-['Noto_Sans','Open_Sans',sans-serif]"><TitleBar /><MenuBar /></div>
      <MainToolbar />
      <div className="flex h-[469px] shrink-0">
        <Browser />
        <div className="flex w-[810px] shrink-0 flex-col border-l border-r border-[#8c8c8c]">
          <div className="flex shrink-0"><ViewToolbar /><Viewport /></div>
          <LowerToolbar />
          <CommandPanel />
        </div>
      </div>
      <StatusBar />
      <TaskBar />
      <div className="absolute bottom-0 right-0 flex h-[40px] w-[122px] flex-col items-center bg-white/65">
        <span className="mt-px flex gap-[8.5px] font-['Noto_Sans_CJK_SC',sans-serif] text-[19px] leading-[23px] text-[#1795f0]">
          {[..."仿真在线"].map((c) => <b key={c} className="font-medium">{c}</b>)}
        </span>
        <span className="whitespace-nowrap font-['Open_Sans','Liberation_Sans',sans-serif] text-[14.4px] font-extrabold leading-[15px] text-[#cf1719]">www.1CAE.com</span>
      </div>
    </div>
  );
}
